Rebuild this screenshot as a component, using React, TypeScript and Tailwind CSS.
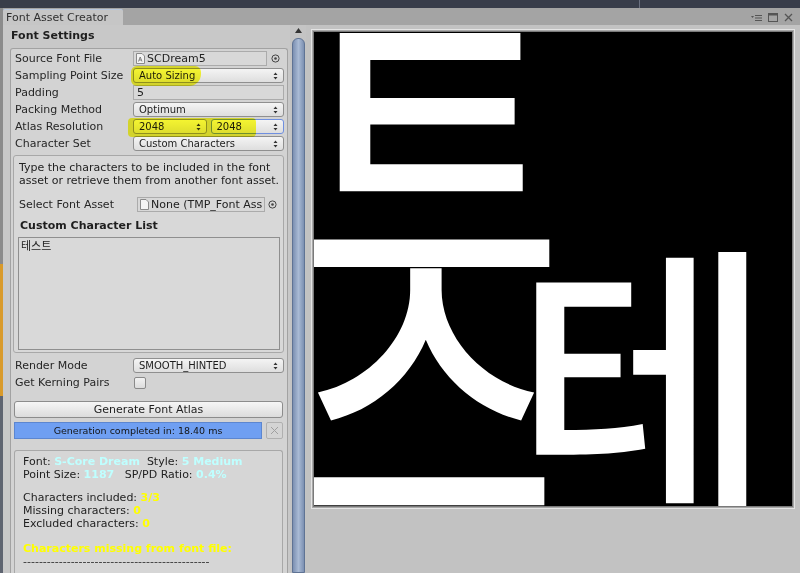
import React from "react";

const ui = "font-['DejaVu_Sans',sans-serif]";

const PopupArrows = () => (
  <svg width="5" height="8" viewBox="0 0 5 8" className="shrink-0">
    <path d="M0.5 3 L2.5 0.5 L4.5 3 Z M0.5 5 L2.5 7.5 L4.5 5 Z" fill="#333" />
  </svg>
);

const Picker = () => (
  <svg width="9" height="9" viewBox="0 0 9 9" className="shrink-0">
    <circle cx="4.5" cy="4.5" r="3.6" fill="none" stroke="#444" strokeWidth="1" />
    <circle cx="4.5" cy="4.5" r="1.3" fill="#444" />
  </svg>
);

const FileIcon = ({ glyph }: { glyph?: boolean }) => (
  <svg width="9" height="11" viewBox="0 0 9 11" className="shrink-0">
    <path d="M0.5 0.5 H6 L8.5 3 V10.5 H0.5 Z" fill="#f4f4f4" stroke="#8a8a8a" />
    {glyph && <path d="M2.5 8.5 L4.2 4 L6 8.5 M3.2 7 H5.3" fill="none" stroke="#666" strokeWidth="0.8" />}
  </svg>
);

const Popup = ({ value, className = "" }: { value: string; className?: string }) => (
  <div
    className={`h-[15px] flex items-center justify-between pl-[5px] pr-[5px] rounded-[3px] border border-[#8f8f8f] bg-gradient-to-b from-[#f4f4f4] to-[#dedede] text-[10px] text-[#1c1c1c] ${className}`}
  >
    <span className="leading-none">{value}</span>
    <PopupArrows />
  </div>
);

const Row = ({ label, children }: { label: string; children: React.ReactNode }) => (
  <div className="h-[17px] flex items-center">
    <span className="w-[118px] shrink-0 text-[11px] text-[#262626] leading-none whitespace-nowrap">{label}</span>
    <div className="flex-1 flex items-center">{children}</div>
  </div>
);

const Cy = ({ children }: { children: React.ReactNode }) => (
  <span className="text-[#bfffff] font-bold">{children}</span>
);
const Yl = ({ children }: { children: React.ReactNode }) => (
  <span className="text-[#ffff00] font-bold">{children}</span>
);

export default function App() {
  return (
    <div className={`w-[800px] h-[573px] overflow-hidden flex flex-col bg-[#c2c2c2] ${ui}`}>
      {/* strip of the editor behind */}
      <div className="h-[8px] shrink-0 flex bg-[#383d4a]">
        <div className="w-[640px] border-r border-[#6a7080]" />
      </div>
      <div className="flex-1 flex min-h-0">
        <div className="w-[3px] shrink-0 flex flex-col">
          <div className="h-[256px] bg-[#8b8b8b]" />
          <div className="h-[132px] bg-[#d99a2a]" />
          <div className="flex-1 bg-[#5e6470]" />
        </div>
        <div className="flex-1 flex flex-col min-w-0">
          {/* tab bar */}
          <div className="h-[17px] shrink-0 flex items-end justify-between bg-[#a4a4a4]">
            <div className="h-[16px] w-[120px] flex items-center pl-[3px] bg-[#c6c6c6] border-t border-[#b8c6dc] rounded-t-[2px] text-[11px] text-[#303030] leading-none">
              Font Asset Creator
            </div>
            <div className="flex items-center gap-[6px] pr-[7px] pb-[3px] text-[#444]">
              <svg width="11" height="8" viewBox="0 0 11 8">
                <path d="M0 2 L3 2 L1.5 4 Z" fill="#555" />
                <path d="M4 1.5 H11 M4 4 H11 M4 6.5 H11" stroke="#555" strokeWidth="1.2" />
              </svg>
              <svg width="10" height="9" viewBox="0 0 10 9">
                <rect x="0.5" y="0.5" width="9" height="8" fill="none" stroke="#555" />
                <rect x="0.5" y="0.5" width="9" height="2" fill="#555" />
              </svg>
              <svg width="9" height="9" viewBox="0 0 9 9">
                <path d="M1 1 L8 8 M8 1 L1 8" stroke="#555" strokeWidth="1.3" />
              </svg>
            </div>
          </div>

          {/* body */}
          <div className="flex-1 flex min-h-0 bg-[#c2c2c2]">
            {/* inspector column */}
            <div className="w-[287px] shrink-0 flex flex-col pl-[7px] pr-[2px] bg-[#c8c8c8] relative">
              <div className="h-[23px] shrink-0 flex items-center pl-[1px] text-[11px] font-bold text-[#1e1e1e]">
                Font Settings
              </div>
              <div className="flex-1 flex flex-col pt-[1px] pl-[4px] pr-[3px] border border-[#a2a2a2] rounded-t-[3px] bg-[#d3d3d3] border-b-0">
                <Row label="Source Font File">
                  <div className="w-[134px] h-[15px] flex items-center gap-[2px] pl-[2px] border border-[#ababab] bg-[#d8d8d8] text-[11px] text-[#222] leading-none">
                    <FileIcon glyph />
                    <span>SCDream5</span>
                  </div>
                  <div className="flex-1 flex justify-center">
                    <Picker />
                  </div>
                </Row>
                <Row label="Sampling Point Size">
                  <Popup value="Auto Sizing" className="flex-1" />
                </Row>
                <Row label="Padding">
                  <div className="flex-1 h-[15px] flex items-center pl-[3px] border border-[#ababab] bg-[#d8d8d8] text-[11px] text-[#222] leading-none">
                    5
                  </div>
                </Row>
                <Row label="Packing Method">
                  <Popup value="Optimum" className="flex-1" />
                </Row>
                <Row label="Atlas Resolution">
                  <div className="flex-1 flex gap-[4px]">
                    <Popup value="2048" className="flex-1" />
                    <Popup value="2048" className="flex-1 !border-[#6f8fe0]" />
                  </div>
                </Row>
                <Row label="Character Set">
                  <Popup value="Custom Characters" className="flex-1" />
                </Row>

                {/* character set box */}
                <div className="mt-[3px] ml-[-2px] flex flex-col pt-[5px] pl-[4px] pr-[3px] pb-[2px] border border-[#a8a8a8] rounded-[3px] bg-[#d8d8d8]">
                  <p className="text-[11px] leading-[13px] text-[#222] pl-[1px]">
                    Type the characters to be included in the font
                    <br />
                    asset or retrieve them from another font asset.
                  </p>
                  <div className="mt-[9px] h-[16px] flex items-center">
                    <span className="w-[119px] shrink-0 pl-[1px] text-[11px] text-[#262626] leading-none">
                      Select Font Asset
                    </span>
                    <div className="w-[128px] h-[15px] flex items-center gap-[2px] pl-[2px] border border-[#ababab] bg-[#d8d8d8] text-[11px] text-[#222] leading-none overflow-hidden whitespace-nowrap">
                      <FileIcon />
                      <span>None (TMP_Font Ass</span>
                    </div>
                    <div className="flex-1 flex justify-center">
                      <Picker />
                    </div>
                  </div>
                  <div className="mt-[6px] h-[14px] flex items-center pl-[2px] text-[11px] font-bold text-[#1e1e1e] leading-none">
                    Custom Character List
                  </div>
                  <div className="mt-[5px] h-[113px] border border-[#8f8f8f] bg-[#d9d9d9] px-[2px] pt-[2px] text-[11px] text-[#222] leading-[13px] font-['DejaVu_Sans','Noto_Sans_CJK_KR',sans-serif]">
                    테스트
                  </div>
                </div>

                <div className="mt-[4px]">
                  <Row label="Render Mode">
                    <Popup value="SMOOTH_HINTED" className="flex-1" />
                  </Row>
                  <Row label="Get Kerning Pairs">
                    <div className="w-[12px] h-[12px] ml-[1px] rounded-[2px] border border-[#8a8a8a] bg-gradient-to-b from-[#f2f2f2] to-[#dcdcdc]" />
                  </Row>
                </div>

                <div className="mt-[10px] h-[17px] ml-[-1px] mr-[1px] flex items-center justify-center rounded-[3px] border border-[#8c8c8c] bg-gradient-to-b from-[#f6f6f6] to-[#dcdcdc] text-[11px] text-[#1e1e1e] leading-none">
                  Generate Font Atlas
                </div>

                <div className="mt-[4px] h-[17px] ml-[-1px] mr-[1px] flex gap-[4px]">
                  <div className="flex-1 flex items-center justify-center bg-[#6f9ff2] border border-[#5c86d0] text-[9.5px] text-[#141414] leading-none">
                    Generation completed in: 18.40 ms
                  </div>
                  <div className="w-[17px] flex items-center justify-center rounded-[2px] border border-[#b0b0b0] bg-[#d4d4d4]">
                    <svg width="9" height="9" viewBox="0 0 9 9">
                      <path d="M1 1 L8 8 M8 1 L1 8" stroke="#a0a0a0" strokeWidth="1" />
                    </svg>
                  </div>
                </div>

                <div className="mt-[11px] ml-[-1px] mr-[1px] flex-1 flex flex-col pt-[4px] pl-[8px] border border-[#a8a8a8] rounded-t-[3px] bg-[#d6d6d6] text-[11px] leading-[13px] text-[#222] border-b-0">
                  <p>
                    Font: <Cy>S-Core Dream</Cy>&nbsp;&nbsp;Style: <Cy>5 Medium</Cy>
                  </p>
                  <p>
                    Point Size: <Cy>1187</Cy>&nbsp;&nbsp;&nbsp;SP/PD Ratio: <Cy>0.4%</Cy>
                  </p>
                  <p className="mt-[10px]">
                    Characters included: <Yl>3/3</Yl>
                  </p>
                  <p>
                    Missing characters: <Yl>0</Yl>
                  </p>
                  <p>
                    Excluded characters: <Yl>0</Yl>
                  </p>
                  <p className="mt-[12px]">
                    <Yl>Characters missing from font file:</Yl>
                  </p>
                  <p className="text-[#333]">-----------------------------------------------</p>
                </div>
              </div>

              {/* highlighter marks */}
              <div className="absolute left-[128px] top-[41px] w-[70px] h-[20px] rounded-[6px] rounded-br-[12px] bg-[#ffff00] opacity-80 mix-blend-multiply" />
              <div className="absolute left-[125px] top-[93px] w-[128px] h-[19px] rounded-[4px] bg-[#ffff00] opacity-80 mix-blend-multiply" />
            </div>

            {/* scrollbar */}
            <div className="w-[16px] shrink-0 flex flex-col items-center bg-[#c4c4c4] pt-[3px]">
              <svg width="7" height="5" viewBox="0 0 7 5">
                <path d="M0 5 L3.5 0 L7 5 Z" fill="#333" />
              </svg>
              <div className="mt-[5px] w-[13px] flex-1 rounded-t-[6px] border border-[#5f7394] bg-gradient-to-r from-[#7c90b2] via-[#a9bad4] to-[#7c90b2]" />
            </div>

            {/* preview of the atlas texture */}
            <div className="flex-1 pl-[5px] pr-[5px] pt-[4px]">
              <div className="w-[484px] h-[480px] border border-[#e4e4e4] p-[1px] bg-[#a8a8a8]">
                <div className="relative w-full h-full overflow-hidden bg-black border border-[#7a7a7a] text-white font-['Noto_Sans_CJK_KR',sans-serif] font-medium leading-none">
                  <span className="absolute left-[-17px] top-[-55px] text-[283px] origin-top-left scale-x-[1.02] scale-y-[1.134]">트</span>
                  <span className="absolute left-[-17px] top-[185px] text-[283px] origin-top-left scale-y-[1.134]">스</span>
                  <span className="absolute left-[201px] top-[190px] text-[280px] origin-top-left scale-y-[1.03]">테</span>
                </div>
              </div>
            </div>
          </div>
        </div>
      </div>
    </div>
  );
}
